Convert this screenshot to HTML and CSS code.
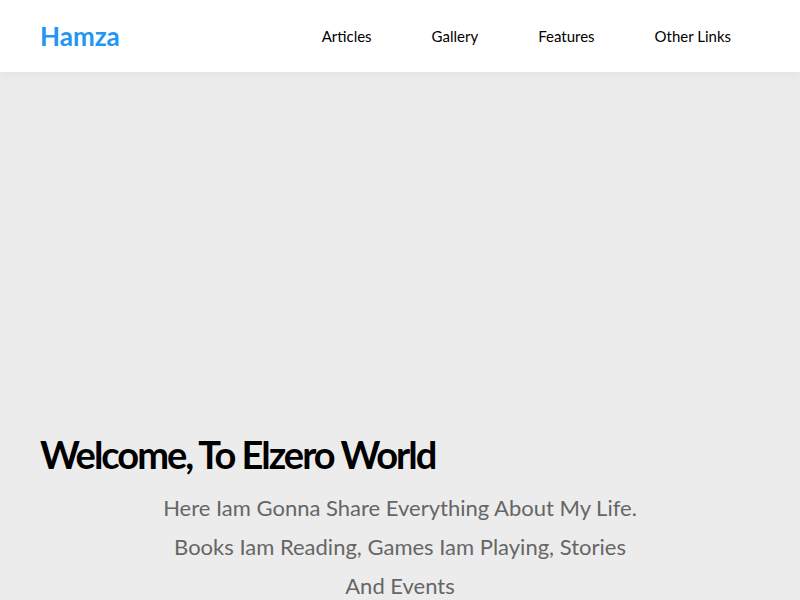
FILE: index.html
```html
<!DOCTYPE html>
<html lang="en">
<head>
<meta charset="UTF-8">
<title>Hamza</title>
<link rel="stylesheet" href="styles.css">
</head>
<body>
<header class="header">
  <div class="container header-inner">
    <a class="logo" href="#">Hamza</a>
    <nav class="nav">
      <a href="#">Articles</a>
      <a href="#">Gallery</a>
      <a href="#">Features</a>
      <a href="#">Other Links</a>
    </nav>
  </div>
</header>
<section class="landing">
  <div class="container">
    <h1 class="title">Welcome, To Elzero World</h1>
    <p class="intro">Here Iam Gonna Share Everything About My Life. Books Iam Reading, Games Iam Playing, Stories And Events</p>
  </div>
</section>
</body>
</html>
```
FILE: styles.css
```css
* { box-sizing: border-box; }
body {
  margin: 0;
  font-family: "Lato", "Noto Sans", sans-serif;
  background: #ececec;
}
a { text-decoration: none; }
.container {
  width: 720px;
  margin: 0 auto;
}
.header {
  background: #fff;
  height: 72px;
  box-shadow: 0 0 10px #ddd;
  position: relative;
}
.header-inner {
  display: flex;
  align-items: center;
  justify-content: space-between;
  height: 100%;
}
.logo {
  color: #2196f3;
  font-size: 26px;
  font-weight: 700;
}
.nav {
  display: flex;
}
.nav a {
  color: #000;
  font-size: 15px;
  padding: 0 29px 0 31px;
  line-height: 72px;
}
.landing {
  background: #ececec;
  padding-top: 354px;
}
.title {
  margin: 0;
  font-size: 38px;
  font-weight: 700;
  letter-spacing: -2px;
  color: #000;
  line-height: 56px;
}
.intro {
  margin: 6px auto 0;
  width: 490px;
  text-align: center;
  font-size: 22px;
  line-height: 39px;
  color: #666;
}
```
